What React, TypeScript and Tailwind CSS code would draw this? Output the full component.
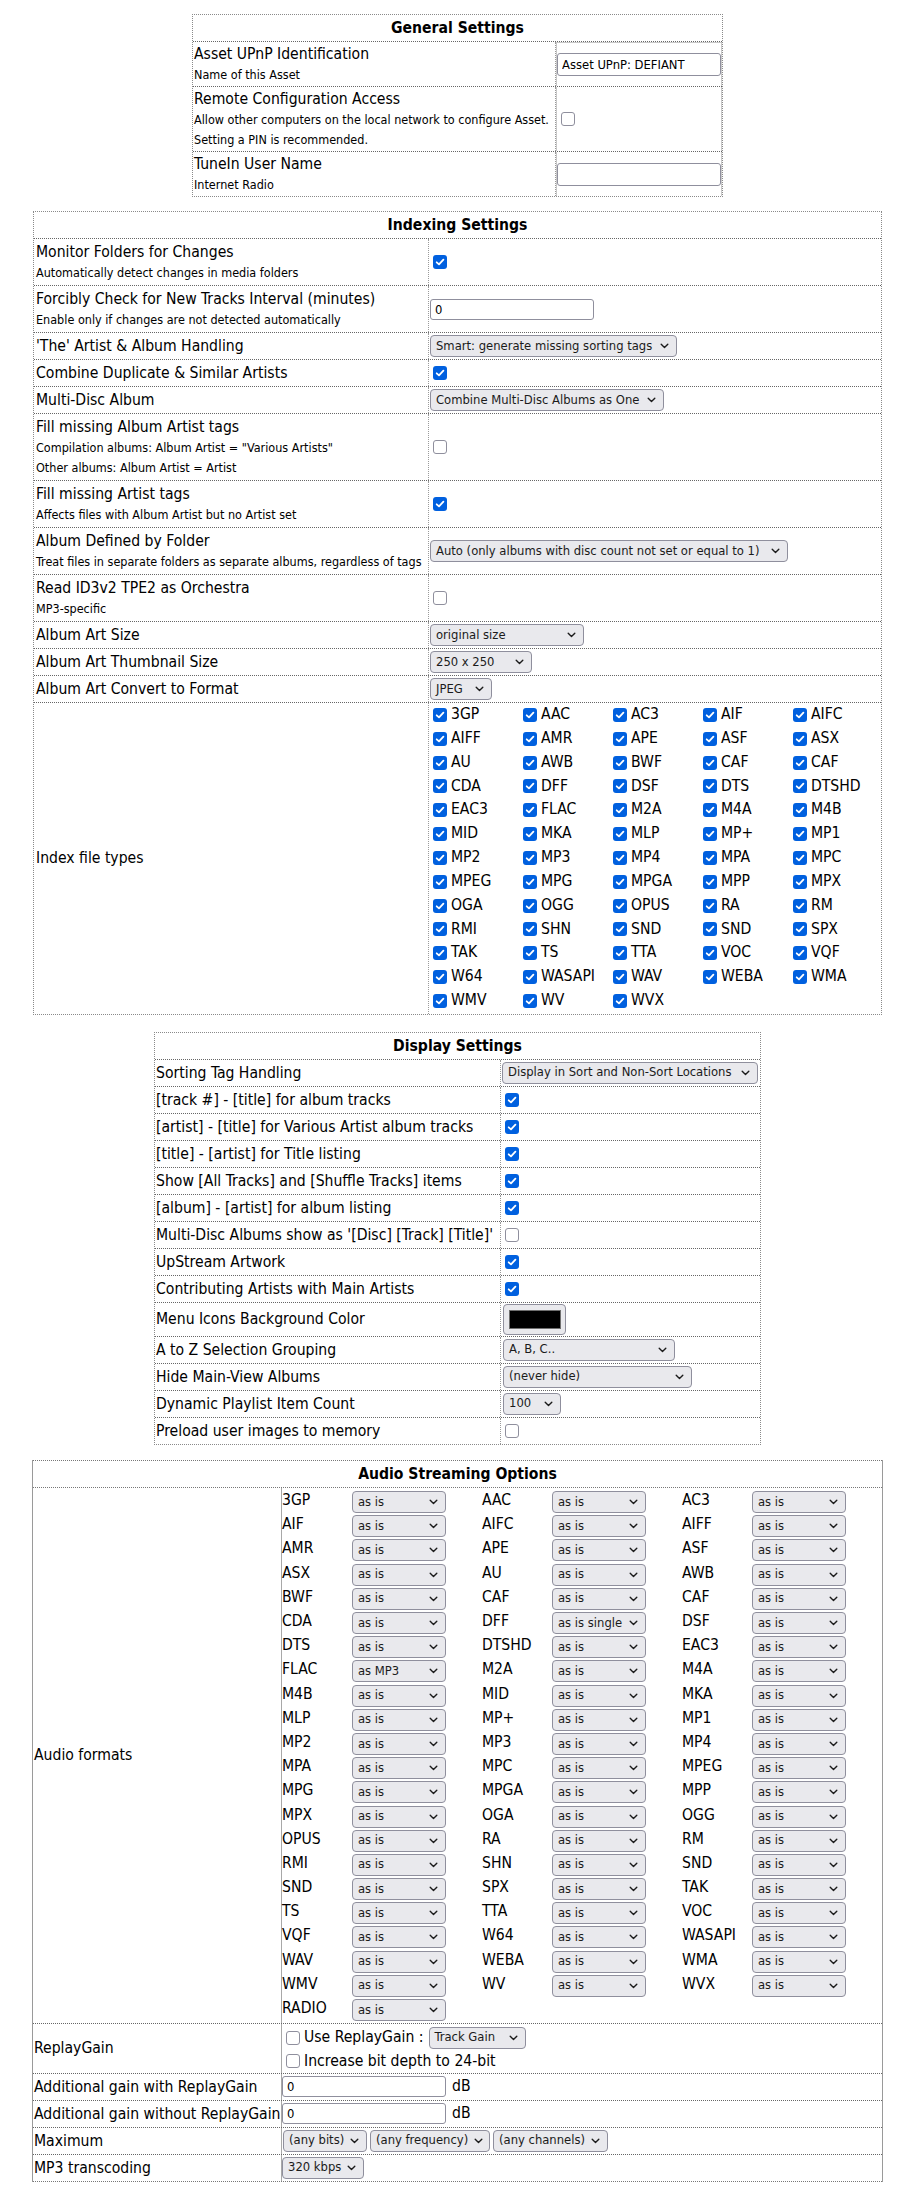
import React from "react";

const F = "font-['DejaVu_Sans_Condensed','DejaVu_Sans',sans-serif]";

function Chevron() {
  return (
    <svg width="9" height="6" viewBox="0 0 9 6" className="shrink-0">
      <path d="M1.2 1.2 L4.5 4.4 L7.8 1.2" fill="none" stroke="#1b1b1b" strokeWidth="1.4" strokeLinecap="round" strokeLinejoin="round" />
    </svg>
  );
}

function Sel({ text, className = "" }: { text: string; className?: string }) {
  return (
    <div
      className={`inline-flex h-[22px] shrink-0 items-center justify-between gap-[6px] rounded-[4px] border border-[#8f8f9d] bg-[#e9e9ed] pl-[5px] pr-[7px] text-[12.9px] leading-none whitespace-nowrap text-[#1b1b1b] ${className}`}
    >
      <span>{text}</span>
      <Chevron />
    </div>
  );
}

function TextIn({ value, className = "" }: { value: string; className?: string }) {
  return (
    <input
      readOnly
      defaultValue={value}
      className={`h-[21px] rounded-[3px] border border-[#8f8f9d] bg-white pl-[4px] text-[12.9px] text-black outline-none ${className}`}
    />
  );
}

function Cb({ on = false, className = "" }: { on?: boolean; className?: string }) {
  return on ? (
    <span className={`inline-flex h-[14px] w-[14px] shrink-0 items-center justify-center rounded-[3px] bg-[#0060df] ${className}`}>
      <svg width="10" height="10" viewBox="0 0 10 10">
        <path d="M1.7 5.3 L4 7.4 L8.4 2.6" fill="none" stroke="#fff" strokeWidth="1.8" strokeLinecap="round" strokeLinejoin="round" />
      </svg>
    </span>
  ) : (
    <span className={`inline-block h-[14px] w-[14px] shrink-0 rounded-[3px] border border-[#8f8f9d] bg-white ${className}`} />
  );
}

function Header({ children }: { children: React.ReactNode }) {
  return (
    <div className="border-b border-dotted border-[#666] py-[2px] text-center text-[15.6px] leading-[22px] font-bold">
      {children}
    </div>
  );
}

function Label({
  title,
  subs = [],
  pad = "px-[1px] py-[2px]",
  line = "border-r border-dotted border-[#9a9a9a]",
}: {
  title: string;
  subs?: string[];
  pad?: string;
  line?: string;
}) {
  return (
    <div className={`flex flex-col justify-center ${line} ${pad}`}>
      <div className="text-[15.6px] leading-[22px] whitespace-nowrap">{title}</div>
      {subs.map((s) => (
        <div key={s} className="text-[12.5px] leading-[20px] whitespace-nowrap">
          {s}
        </div>
      ))}
    </div>
  );
}

function Row({
  cols,
  last = false,
  children,
}: {
  cols: string;
  last?: boolean;
  children: React.ReactNode;
}) {
  return <div className={`grid ${cols} ${last ? "" : "border-b border-dotted border-[#666]"}`}>{children}</div>;
}

function Val({ children, className = "" }: { children?: React.ReactNode; className?: string }) {
  return <div className={`flex items-center ${className}`}>{children}</div>;
}

/* ---------------- General ---------------- */
const GC = "grid-cols-[363px_166px]";
function General() {
  const gl = "px-[1px] py-[1px]";
  return (
    <div className="w-[531px] border border-dotted border-[#8a8a8a]">
      <Header>General Settings</Header>
      <Row cols={GC}>
        <Label pad={gl} title="Asset UPnP Identification" subs={["Name of this Asset"]} />
        <Val className="border-x border-t border-[#c8c8c8]">
          <TextIn value="Asset UPnP: DEFIANT" className="h-[23px] w-[164px]" />
        </Val>
      </Row>
      <Row cols={GC}>
        <Label
          pad={gl}
          title="Remote Configuration Access"
          subs={["Allow other computers on the local network to configure Asset.", "Setting a PIN is recommended."]}
        />
        <Val className="border-x border-[#c8c8c8]">
          <Cb className="ml-[4px]" />
        </Val>
      </Row>
      <Row cols={GC} last>
        <Label pad={gl} title="TuneIn User Name" subs={["Internet Radio"]} />
        <Val className="border-x border-[#c8c8c8]">
          <TextIn value="" className="h-[23px] w-[164px]" />
        </Val>
      </Row>
    </div>
  );
}

/* ---------------- Indexing ---------------- */
const IC = "grid-cols-[395px_452px]";
const FILE_TYPES = [
  "3GP", "AAC", "AC3", "AIF", "AIFC",
  "AIFF", "AMR", "APE", "ASF", "ASX",
  "AU", "AWB", "BWF", "CAF", "CAF",
  "CDA", "DFF", "DSF", "DTS", "DTSHD",
  "EAC3", "FLAC", "M2A", "M4A", "M4B",
  "MID", "MKA", "MLP", "MP+", "MP1",
  "MP2", "MP3", "MP4", "MPA", "MPC",
  "MPEG", "MPG", "MPGA", "MPP", "MPX",
  "OGA", "OGG", "OPUS", "RA", "RM",
  "RMI", "SHN", "SND", "SND", "SPX",
  "TAK", "TS", "TTA", "VOC", "VQF",
  "W64", "WASAPI", "WAV", "WEBA", "WMA",
  "WMV", "WV", "WVX",
];

function Indexing() {
  const ip = "px-[2px] py-[2px]";
  return (
    <div className="mt-[14px] w-[849px] border border-dotted border-[#8a8a8a]">
      <Header>Indexing Settings</Header>
      <Row cols={IC}>
        <Label pad={ip} title="Monitor Folders for Changes" subs={["Automatically detect changes in media folders"]} />
        <Val><Cb on className="ml-[4px]" /></Val>
      </Row>
      <Row cols={IC}>
        <Label pad={ip} title="Forcibly Check for New Tracks Interval (minutes)" subs={["Enable only if changes are not detected automatically"]} />
        <Val><TextIn value="0" className="ml-[1px] w-[164px]" /></Val>
      </Row>
      <Row cols={IC}>
        <Label pad={ip} title="'The' Artist & Album Handling" />
        <Val><Sel text="Smart: generate missing sorting tags" className="ml-[1px] w-[247px]" /></Val>
      </Row>
      <Row cols={IC}>
        <Label pad={ip} title="Combine Duplicate & Similar Artists" />
        <Val><Cb on className="ml-[4px]" /></Val>
      </Row>
      <Row cols={IC}>
        <Label pad={ip} title="Multi-Disc Album" />
        <Val><Sel text="Combine Multi-Disc Albums as One" className="ml-[1px] w-[234px]" /></Val>
      </Row>
      <Row cols={IC}>
        <Label
          pad={ip}
          title="Fill missing Album Artist tags"
          subs={['Compilation albums: Album Artist = "Various Artists"', "Other albums: Album Artist = Artist"]}
        />
        <Val><Cb className="ml-[4px]" /></Val>
      </Row>
      <Row cols={IC}>
        <Label pad={ip} title="Fill missing Artist tags" subs={["Affects files with Album Artist but no Artist set"]} />
        <Val><Cb on className="ml-[4px]" /></Val>
      </Row>
      <Row cols={IC}>
        <Label pad={ip} title="Album Defined by Folder" subs={["Treat files in separate folders as separate albums, regardless of tags"]} />
        <Val><Sel text="Auto (only albums with disc count not set or equal to 1)" className="ml-[1px] w-[358px]" /></Val>
      </Row>
      <Row cols={IC}>
        <Label pad={ip} title="Read ID3v2 TPE2 as Orchestra" subs={["MP3-specific"]} />
        <Val><Cb className="ml-[4px]" /></Val>
      </Row>
      <Row cols={IC}>
        <Label pad={ip} title="Album Art Size" />
        <Val><Sel text="original size" className="ml-[1px] w-[154px]" /></Val>
      </Row>
      <Row cols={IC}>
        <Label pad={ip} title="Album Art Thumbnail Size" />
        <Val><Sel text="250 x 250" className="ml-[1px] w-[102px]" /></Val>
      </Row>
      <Row cols={IC}>
        <Label pad={ip} title="Album Art Convert to Format" />
        <Val><Sel text="JPEG" className="ml-[1px] w-[62px]" /></Val>
      </Row>
      <Row cols={IC} last>
        <Label pad={ip} title="Index file types" />
        <div className="grid grid-cols-[90px_90px_90px_90px_90px] auto-rows-[23.83px] pb-[1px]">
          {FILE_TYPES.map((t, i) => (
            <div key={i} className="flex items-center">
              <Cb on className="ml-[4px]" />
              <span className="ml-[4px] text-[15.6px] leading-none whitespace-nowrap">{t}</span>
            </div>
          ))}
        </div>
      </Row>
    </div>
  );
}

/* ---------------- Display ---------------- */
const DC = "grid-cols-[346px_259px]";
function Display() {
  const dp = "px-[1px] py-[2px]";
  const rows: { t: string; on: boolean }[] = [
    { t: "[track #] - [title] for album tracks", on: true },
    { t: "[artist] - [title] for Various Artist album tracks", on: true },
    { t: "[title] - [artist] for Title listing", on: true },
    { t: "Show [All Tracks] and [Shuffle Tracks] items", on: true },
    { t: "[album] - [artist] for album listing", on: true },
    { t: "Multi-Disc Albums show as '[Disc] [Track] [Title]'", on: false },
    { t: "UpStream Artwork", on: true },
    { t: "Contributing Artists with Main Artists", on: true },
  ];
  return (
    <div className="mt-[17px] w-[607px] border border-dotted border-[#8a8a8a]">
      <Header>Display Settings</Header>
      <Row cols={DC}>
        <Label pad={dp} title="Sorting Tag Handling" />
        <Val><Sel text="Display in Sort and Non-Sort Locations" className="ml-[1px] w-[256px]" /></Val>
      </Row>
      {rows.map((r) => (
        <Row key={r.t} cols={DC}>
          <Label pad={dp} title={r.t} />
          <Val><Cb on={r.on} className="ml-[4px]" /></Val>
        </Row>
      ))}
      <Row cols={DC}>
        <Label pad={dp} title="Menu Icons Background Color" />
        <Val className="py-[1px]">
          <div className="ml-[2px] flex h-[31px] w-[63px] items-center justify-center rounded-[4px] border border-[#8f8f9d] bg-[#e9e9ed]">
            <div className="h-[19px] w-[52px] border border-[#6f6f6f] bg-black" />
          </div>
        </Val>
      </Row>
      <Row cols={DC}>
        <Label pad={dp} title="A to Z Selection Grouping" />
        <Val><Sel text="A, B, C.." className="ml-[2px] w-[172px]" /></Val>
      </Row>
      <Row cols={DC}>
        <Label pad={dp} title="Hide Main-View Albums" />
        <Val><Sel text="(never hide)" className="ml-[2px] w-[189px]" /></Val>
      </Row>
      <Row cols={DC}>
        <Label pad={dp} title="Dynamic Playlist Item Count" />
        <Val><Sel text="100" className="ml-[2px] w-[58px]" /></Val>
      </Row>
      <Row cols={DC} last>
        <Label pad={dp} title="Preload user images to memory" />
        <Val><Cb className="ml-[4px]" /></Val>
      </Row>
    </div>
  );
}

/* ---------------- Audio ---------------- */
const AC = "grid-cols-[249px_600px]";
const FORMATS: [string, string][] = [
  ["3GP", "as is"], ["AAC", "as is"], ["AC3", "as is"],
  ["AIF", "as is"], ["AIFC", "as is"], ["AIFF", "as is"],
  ["AMR", "as is"], ["APE", "as is"], ["ASF", "as is"],
  ["ASX", "as is"], ["AU", "as is"], ["AWB", "as is"],
  ["BWF", "as is"], ["CAF", "as is"], ["CAF", "as is"],
  ["CDA", "as is"], ["DFF", "as is single"], ["DSF", "as is"],
  ["DTS", "as is"], ["DTSHD", "as is"], ["EAC3", "as is"],
  ["FLAC", "as MP3"], ["M2A", "as is"], ["M4A", "as is"],
  ["M4B", "as is"], ["MID", "as is"], ["MKA", "as is"],
  ["MLP", "as is"], ["MP+", "as is"], ["MP1", "as is"],
  ["MP2", "as is"], ["MP3", "as is"], ["MP4", "as is"],
  ["MPA", "as is"], ["MPC", "as is"], ["MPEG", "as is"],
  ["MPG", "as is"], ["MPGA", "as is"], ["MPP", "as is"],
  ["MPX", "as is"], ["OGA", "as is"], ["OGG", "as is"],
  ["OPUS", "as is"], ["RA", "as is"], ["RM", "as is"],
  ["RMI", "as is"], ["SHN", "as is"], ["SND", "as is"],
  ["SND", "as is"], ["SPX", "as is"], ["TAK", "as is"],
  ["TS", "as is"], ["TTA", "as is"], ["VOC", "as is"],
  ["VQF", "as is"], ["W64", "as is"], ["WASAPI", "as is"],
  ["WAV", "as is"], ["WEBA", "as is"], ["WMA", "as is"],
  ["WMV", "as is"], ["WV", "as is"], ["WVX", "as is"],
  ["RADIO", "as is"],
];

function Audio() {
  const ap = "px-[1px] py-[2px]";
  const al = "border-r border-[#a8a8a8]";
  return (
    <div className="mt-[15px] w-[851px] border-x border-[#9a9a9a]">
      <div className="border-t border-b border-dotted border-[#777] py-[2px] text-center text-[15.6px] leading-[22px] font-bold">
        Audio Streaming Options
      </div>
      <Row cols={AC}>
        <Label pad={ap} line={al} title="Audio formats" />
        <div className="grid grid-cols-[70px_130px_70px_130px_70px_130px] auto-rows-[24.2px] items-center pt-[1px] pb-[2px]">
          {FORMATS.map(([n, v], i) => (
            <React.Fragment key={i}>
              <span className="text-[15.6px] leading-none whitespace-nowrap">{n}</span>
              <div>
                <Sel text={v} className="w-[94px]" />
              </div>
            </React.Fragment>
          ))}
        </div>
      </Row>
      <Row cols={AC}>
        <Label pad={ap} line={al} title="ReplayGain" />
        <div className="flex flex-col pt-[2px]">
          <div className="flex h-[24px] items-center text-[15.6px] whitespace-nowrap">
            <Cb className="ml-[4px]" />
            <span className="ml-[4px]">Use ReplayGain :</span>
            <Sel text="Track Gain" className="ml-[5px] w-[97px]" />
          </div>
          <div className="flex h-[23px] items-center text-[15.6px] whitespace-nowrap">
            <Cb className="ml-[4px]" />
            <span className="ml-[4px]">Increase bit depth to 24-bit</span>
          </div>
        </div>
      </Row>
      <Row cols={AC}>
        <Label pad={ap} line={al} title="Additional gain with ReplayGain" />
        <Val>
          <TextIn value="0" className="w-[164px]" />
          <span className="ml-[6px] text-[15.6px]">dB</span>
        </Val>
      </Row>
      <Row cols={AC}>
        <Label pad={ap} line={al} title="Additional gain without ReplayGain" />
        <Val>
          <TextIn value="0" className="w-[164px]" />
          <span className="ml-[6px] text-[15.6px]">dB</span>
        </Val>
      </Row>
      <Row cols={AC}>
        <Label pad={ap} line={al} title="Maximum" />
        <Val className="gap-[3px]">
          <Sel text="(any bits)" className="ml-[1px] w-[84px]" />
          <Sel text="(any frequency)" className="w-[120px]" />
          <Sel text="(any channels)" className="w-[115px]" />
        </Val>
      </Row>
      <div className="grid grid-cols-[249px_600px] border-b border-dotted border-[#777]">
        <Label pad={ap} line={al} title="MP3 transcoding" />
        <Val><Sel text="320 kbps" className="w-[82px]" /></Val>
      </div>
    </div>
  );
}

export default function App() {
  return (
    <div className={`${F} flex min-h-[2196px] flex-col items-center bg-white pt-[14px] pl-[16px] text-black`}>
      <General />
      <Indexing />
      <Display />
      <Audio />
    </div>
  );
}
